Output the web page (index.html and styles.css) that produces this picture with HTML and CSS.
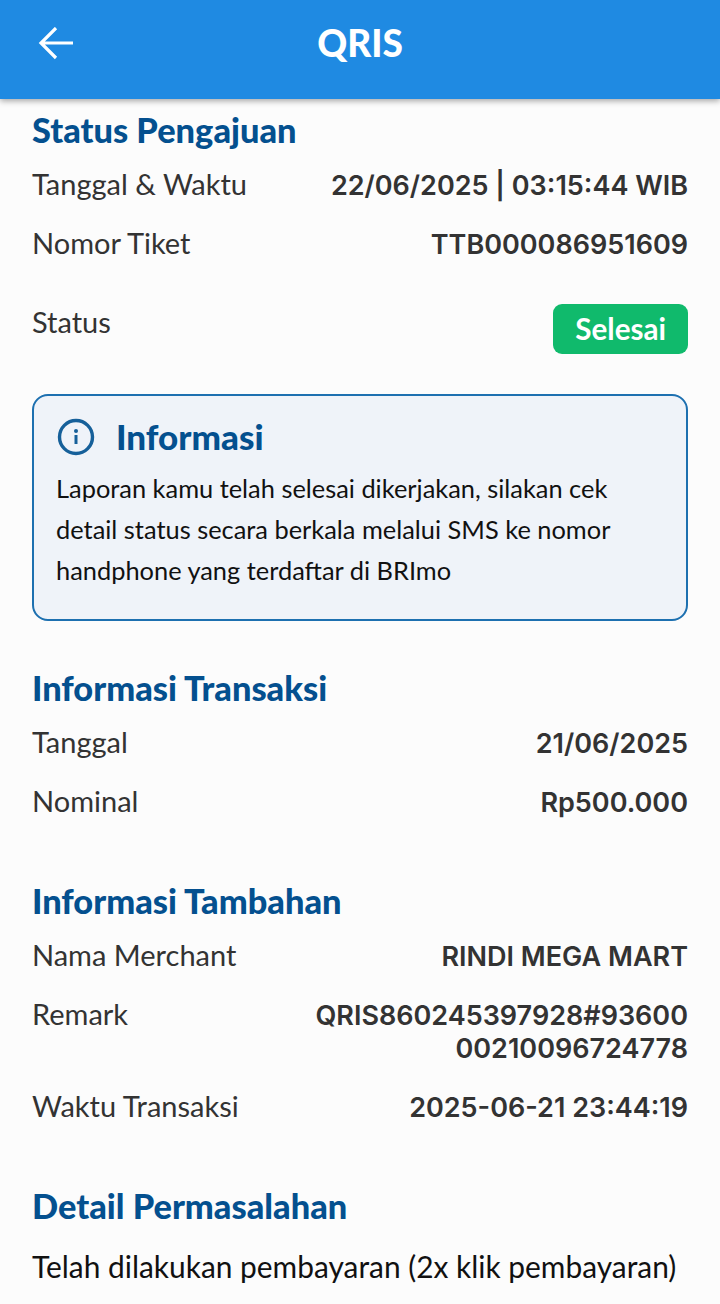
FILE: index.html
```html
<!DOCTYPE html>
<html>
<head>
  <title>QRIS</title>
  <link rel="stylesheet" href="styles.css">
</head>
<body>
  <header class="topbar">
    <svg class="back" width="38" height="36" viewBox="0 0 38 36">
      <path d="M35 16H4M18 1 3 16l15 15" fill="none" stroke="#fff" stroke-width="3.2"/>
    </svg>
    <h1>QRIS</h1>
  </header>

  <main class="content">
    <section class="first">
      <h2>Status Pengajuan</h2>
      <div class="row"><span>Tanggal &amp; Waktu</span><b>22/06/2025 | 03:15:44 WIB</b></div>
      <div class="row"><span>Nomor Tiket</span><b>TTB000086951609</b></div>
      <div class="row row-status"><span>Status</span><b class="badge">Selesai</b></div>

      <div class="info">
        <div class="info-head">
          <svg class="info-icon" width="38" height="38" viewBox="0 0 38 38">
            <circle cx="19" cy="19" r="16.5" fill="none" stroke="#16609a" stroke-width="3.4"/>
            <circle cx="19" cy="13" r="2" fill="#16609a"/>
            <path d="M19 17v9" stroke="#16609a" stroke-width="3"/>
          </svg>
          <h3>Informasi</h3>
        </div>
        <p>Laporan kamu telah selesai dikerjakan, silakan cek detail status secara berkala melalui SMS ke nomor handphone yang terdaftar di BRImo</p>
      </div>
    </section>

    <section class="transaksi">
      <h2>Informasi Transaksi</h2>
      <div class="row"><span>Tanggal</span><b>21/06/2025</b></div>
      <div class="row"><span>Nominal</span><b>Rp500.000</b></div>
    </section>

    <section class="tambahan">
      <h2>Informasi Tambahan</h2>
      <div class="row"><span>Nama Merchant</span><b>RINDI MEGA MART</b></div>
      <div class="row"><span>Remark</span><b class="wrap">QRIS860245397928#9360000210096724778</b></div>
      <div class="row"><span>Waktu Transaksi</span><b>2025-06-21 23:44:19</b></div>
    </section>

    <section class="detail">
      <h2>Detail Permasalahan</h2>
      <p>Telah dilakukan pembayaran (2x klik pembayaran)</p>
    </section>
  </main>
</body>
</html>
```

FILE: styles.css
```css
html, body {
  height: 100%;
  margin: 0;
  overflow: hidden;
}

body {
  background-color: #fcfcfc;
  color: #333;
  font-family: Lato, "Open Sans", sans-serif;
}

.topbar {
  height: 99px;
  background-color: #1f8ae2;
  box-shadow: 0 2px 6px rgba(0, 0, 0, 0.35);
  display: flex;
  justify-content: center;
  padding-top: 24px;
  box-sizing: border-box;
  position: relative;
}

.topbar h1 {
  margin: 0;
  color: #fff;
  font-size: 37px;
  line-height: 38px;
  font-weight: 900;
}

.back {
  position: absolute;
  left: 38px;
  top: 27px;
}

.content {
  padding: 0 32px;
}

h2 {
  margin: 0 0 17px;
  color: #04508f;
  font-size: 34.4px;
  line-height: 40px;
  font-weight: 900;
}

.first {
  padding-top: 11px;
}

.transaksi {
  padding-top: 47px;
}

.tambahan {
  padding-top: 38px;
}

.detail {
  padding-top: 38px;
}

.row {
  display: flex;
  justify-content: space-between;
  gap: 40px;
  font-size: 29px;
  line-height: 33px;
  margin-bottom: 26px;
}

.row b {
  font-family: Inter, sans-serif;
  font-weight: 600;
  font-size: 27px;
  text-align: right;
  margin: 2px 0 -2px;
}

.row .wrap {
  width: 380px;
  word-break: break-all;
}

.row-status {
  margin-bottom: 40px;
  padding-top: 20px;
}

.row .badge {
  background-color: #10ba6c;
  color: #fff;
  border-radius: 9px;
  padding: 0 22px;
  height: 50px;
  line-height: 50px;
  font-family: Lato, sans-serif;
  font-weight: 700;
  font-size: 29.6px;
  box-sizing: border-box;
  margin: -1px 0 0;
}

.info {
  background-color: #eff3f9;
  border: 2px solid #1d70b0;
  border-radius: 16px;
  padding: 20px 22px 28px;
}

.info-head {
  display: flex;
  align-items: center;
  gap: 21px;
  margin-bottom: 12px;
}

.info-icon {
  margin: 2px 0 0 1px;
}

.info-head h3 {
  margin: 0;
  color: #04508f;
  font-size: 35px;
  line-height: 40px;
  font-weight: 900;
}

.info p {
  margin: 0;
  color: #111;
  font-size: 25.4px;
  line-height: 41px;
}

.detail p {
  margin: 21px 0 0;
  color: #111;
  font-size: 29.9px;
  line-height: 38px;
}
```
